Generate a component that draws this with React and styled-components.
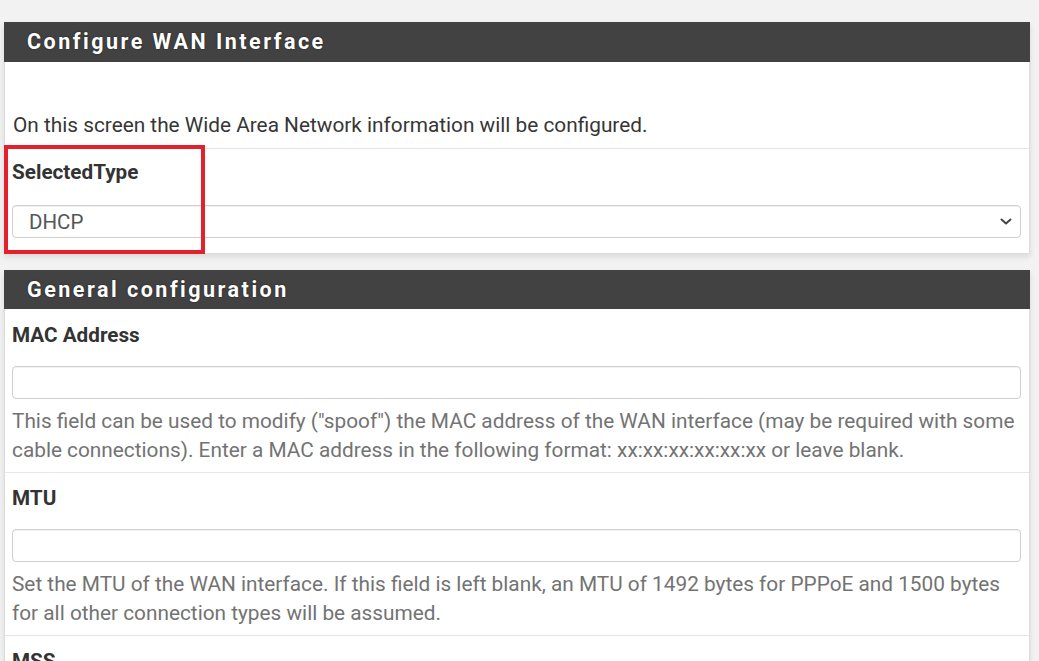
import React from "react";
import styled, { createGlobalStyle } from "styled-components";

const Global = createGlobalStyle`
  html, body { margin: 0; padding: 0; background: #f2f2f2; }
  body { font-family: Roboto, "Liberation Sans", Arial, sans-serif; color: #333; overflow: hidden; }
  * { box-sizing: border-box; }
`;

const Page = styled.div`
  padding: 22px 9px 0 4px;
  display: flex;
  flex-direction: column;
  gap: 16px;
`;

const Panel = styled.section`
  position: relative;
  background: #fff;
  border: 1px solid #dcdcdc;
  border-top: none;
  box-shadow: 0 3px 6px rgba(0, 0, 0, 0.1);
`;

const PanelHeader = styled.h2`
  margin: 0 -1px;
  height: ${(p) => p.$h || 40}px;
  background: #424242;
  color: #fff;
  font-size: 21.5px;
  font-weight: 700;
  letter-spacing: 2.5px;
  line-height: ${(p) => p.$h || 40}px;
  padding-left: 23px;
  text-shadow: 0 0 2px rgba(0, 0, 0, 0.6);
`;

const Intro = styled.p`
  margin: 0;
  padding: 49px 8px 8px;
  font-size: 20.8px;
  line-height: 29px;
  color: #363636;
  border-bottom: 1px solid #e6e6e6;
`;

const Row = styled.div`
  padding: ${(p) => p.$top || 10}px 8px ${(p) => p.$bottom || 8}px 7px;
  border-bottom: ${(p) => (p.$last ? "none" : "1px solid #e6e6e6")};
`;

const Label = styled.div`
  font-size: 20.7px;
  font-weight: 700;
  line-height: 30px;
  color: #333;
`;

const Field = styled.div`
  position: relative;
  margin-top: ${(p) => p.$gap || 16}px;
  height: 33px;
  border: 1px solid #cfcfcf;
  border-radius: 4px;
  background: #fff;
  box-shadow: inset 0 1px 1px rgba(0, 0, 0, 0.06);
  display: flex;
  align-items: center;
  padding-left: 16px;
  font-size: 20.5px;
  color: #555;
`;

const Chevron = styled.svg`
  position: absolute;
  right: 8px;
  top: 11px;
`;

const Help = styled.p`
  margin: 8px 0 0;
  font-size: 20.8px;
  line-height: 28.5px;
  color: #737373;
`;

const Highlight = styled.div`
  position: absolute;
  left: -1px;
  top: 123px;
  width: 201px;
  height: 109px;
  border: 4px solid #e3202b;
  pointer-events: none;
`;

export default function App() {
  return (
    <>
      <Global />
      <Page>
        <Panel>
          <PanelHeader $h={40}>Configure WAN Interface</PanelHeader>
          <Intro>On this screen the Wide Area Network information will be configured.</Intro>
          <Row $top={8} $bottom={15} $last>
            <Label>SelectedType</Label>
            <Field $gap={18}>
              DHCP
              <Chevron width="12" height="9" viewBox="0 0 12 9">
                <path d="M1.5 2.5 L6 6.5 L10.5 2.5" fill="none" stroke="#444" strokeWidth="2" strokeLinecap="round" strokeLinejoin="round" />
              </Chevron>
            </Field>
          </Row>
          <Highlight />
        </Panel>
        <Panel>
          <PanelHeader $h={39}>General configuration</PanelHeader>
          <Row $top={11}>
            <Label>MAC Address</Label>
            <Field />
            <Help>
              This field can be used to modify ("spoof") the MAC address of the WAN interface (may be required with some cable connections). Enter a MAC address in the following format: xx:xx:xx:xx:xx:xx or leave blank.
            </Help>
          </Row>
          <Row>
            <Label>MTU</Label>
            <Field />
            <Help>
              Set the MTU of the WAN interface. If this field is left blank, an MTU of 1492 bytes for PPPoE and 1500 bytes for all other connection types will be assumed.
            </Help>
          </Row>
          <Row>
            <Label>MSS</Label>
            <Field />
          </Row>
        </Panel>
      </Page>
    </>
  );
}
